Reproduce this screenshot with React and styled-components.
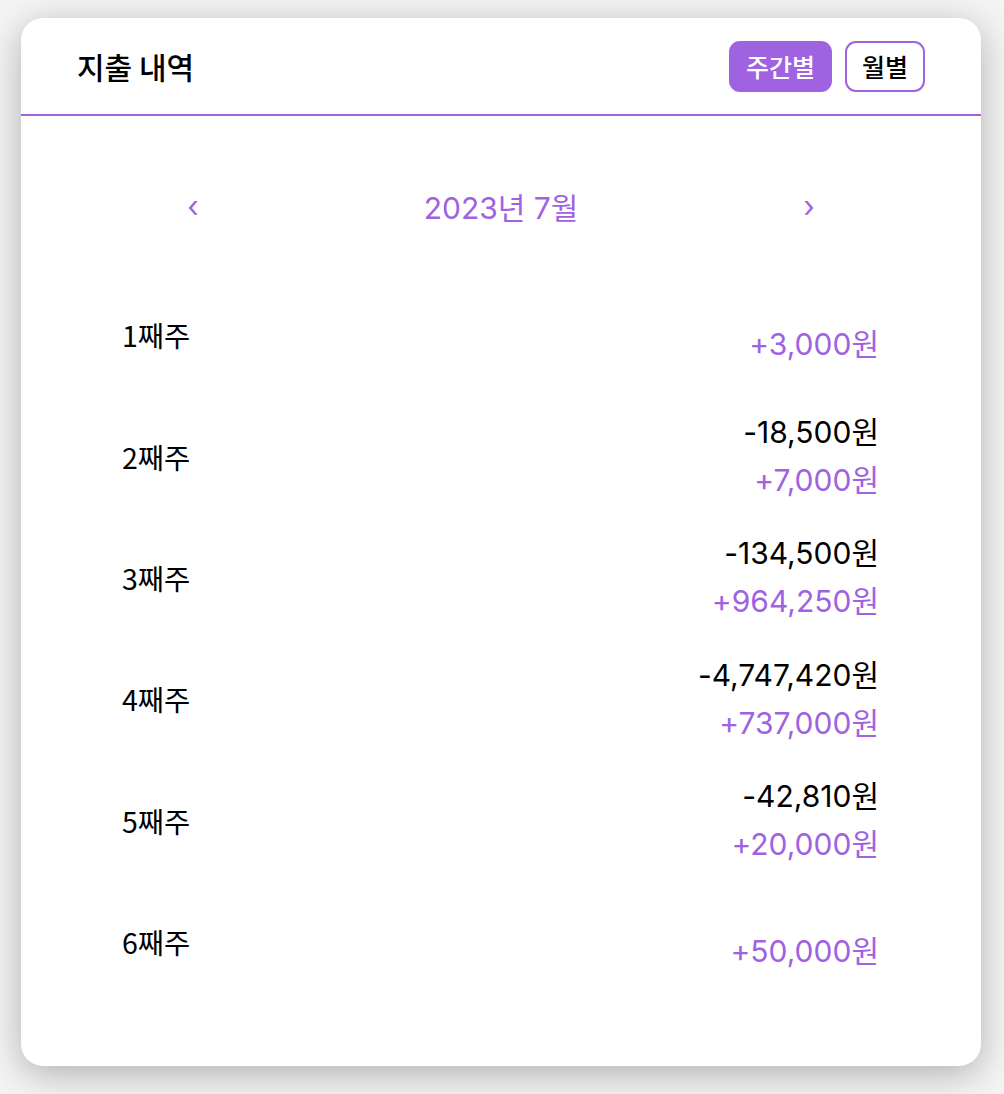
import styled, { createGlobalStyle } from "styled-components";

const GlobalStyle = createGlobalStyle`
  html, body {
    margin: 0;
    padding: 0;
    background: #f4f4f4;
  }
  body {
    font-family: Inter, "Noto Sans CJK KR", sans-serif;
  }
`;

const PURPLE = "#9f62e1";

const Page = styled.div`
  padding: 18px 23px 28px 21px;
`;

const Card = styled.div`
  width: 960px;
  height: 1048px;
  background: #fff;
  border-radius: 22px;
  box-shadow: 0 8px 36px rgba(0, 0, 0, 0.28);
  display: flex;
  flex-direction: column;
  overflow: hidden;
`;

const Header = styled.div`
  height: 98px;
  box-sizing: border-box;
  padding: 0 56px 0 56px;
  display: flex;
  align-items: center;
  justify-content: space-between;
  border-bottom: 2px solid ${PURPLE};
`;

const Title = styled.div`
  font-size: 30px;
  font-weight: 500;
  color: #000;
  font-family: "Noto Sans CJK KR", sans-serif;
`;

const Toggle = styled.div`
  display: flex;
  gap: 13px;
`;

const ToggleButton = styled.button`
  height: 51px;
  padding: 0 15px;
  border-radius: 11px;
  border: 2px solid ${PURPLE};
  background: ${(p) => (p.$active ? PURPLE : "#fff")};
  color: ${(p) => (p.$active ? "#fff" : "#000")};
  font-family: "Noto Sans CJK KR", sans-serif;
  font-size: 25px;
  font-weight: 500;
  cursor: pointer;
`;

const MonthNav = styled.div`
  width: 630px;
  margin: 60px auto 0;
  display: flex;
  align-items: center;
  justify-content: space-between;
  color: ${PURPLE};
  height: 60px;
`;

const Arrow = styled.span`
  font-size: 30px;
  width: 14px;
  text-align: center;
  line-height: 1;
`;

const MonthLabel = styled.div`
  font-size: 30px;
  font-weight: 400;
`;

const WeekList = styled.div`
  margin-top: 38px;
  padding: 0 102px 0 101px;
  display: flex;
  flex-direction: column;
`;

const WeekRow = styled.div`
  height: 121.4px;
  display: flex;
  align-items: center;
  justify-content: space-between;
`;

const WeekLabel = styled.div`
  font-size: 28.5px;
  font-family: "Noto Sans CJK KR", sans-serif;
  color: #000;
`;

const Amounts = styled.div`
  display: flex;
  flex-direction: column;
  align-items: flex-end;
`;

const Amount = styled.div`
  font-size: 30px;
  line-height: 48px;
  color: ${(p) => (p.$income ? PURPLE : "#000")};
  height: ${(p) => (p.$empty ? "18px" : "48px")};
`;

const weeks = [
  { label: "1째주", out: null, in: "+3,000원" },
  { label: "2째주", out: "-18,500원", in: "+7,000원" },
  { label: "3째주", out: "-134,500원", in: "+964,250원" },
  { label: "4째주", out: "-4,747,420원", in: "+737,000원" },
  { label: "5째주", out: "-42,810원", in: "+20,000원" },
  { label: "6째주", out: null, in: "+50,000원" },
];

export default function App() {
  return (
    <>
      <GlobalStyle />
      <Page>
        <Card>
          <Header>
            <Title>지출 내역</Title>
            <Toggle>
              <ToggleButton $active>주간별</ToggleButton>
              <ToggleButton>월별</ToggleButton>
            </Toggle>
          </Header>
          <MonthNav>
            <Arrow>‹</Arrow>
            <MonthLabel>2023년 7월</MonthLabel>
            <Arrow>›</Arrow>
          </MonthNav>
          <WeekList>
            {weeks.map((w) => (
              <WeekRow key={w.label}>
                <WeekLabel>{w.label}</WeekLabel>
                <Amounts>
                  {w.out ? <Amount>{w.out}</Amount> : <Amount $empty />}
                  <Amount $income>{w.in}</Amount>
                </Amounts>
              </WeekRow>
            ))}
          </WeekList>
        </Card>
      </Page>
    </>
  );
}
